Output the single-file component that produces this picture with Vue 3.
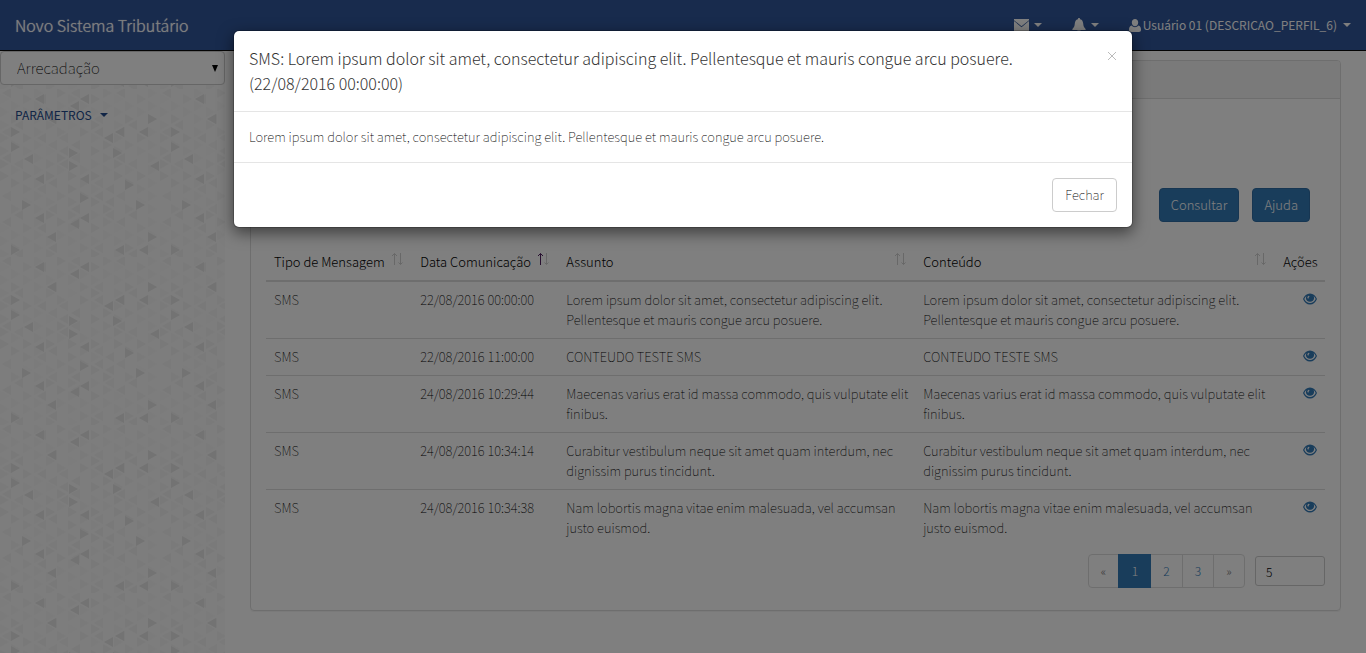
<script setup>
import { ref } from 'vue'

const modulo = ref('Arrecadação')
const porPagina = ref('5')

const colunas = [
  { titulo: 'Tipo de Mensagem', classe: 'c-tipo' },
  { titulo: 'Data Comunicação', classe: 'c-data', ordem: 'asc' },
  { titulo: 'Assunto', classe: 'c-assunto' },
  { titulo: 'Conteúdo', classe: 'c-conteudo' },
]

const lorem = 'Lorem ipsum dolor sit amet, consectetur adipiscing elit. Pellentesque et mauris congue arcu posuere.'
const mensagens = [
  { data: '22/08/2016 00:00:00', texto: lorem },
  { data: '22/08/2016 11:00:00', texto: 'CONTEUDO TESTE SMS' },
  { data: '24/08/2016 10:29:44', texto: 'Maecenas varius erat id massa commodo, quis vulputate elit finibus.' },
  { data: '24/08/2016 10:34:14', texto: 'Curabitur vestibulum neque sit amet quam interdum, nec dignissim purus tincidunt.' },
  { data: '24/08/2016 10:34:38', texto: 'Nam lobortis magna vitae enim malesuada, vel accumsan justo euismod.' },
]

// Triangle texture of the sidebar: [x of the upright side, y centre, direction]
const fortes = [
  [44, 10, -1], [89, 10, -1], [79, 17, -1], [56, 30, -1], [148, 30, 1], [11, 43, 1],
  [124, 43, -1], [148, 43, -1], [113, 49, -1], [11, 58, 1], [69, 64, 1], [113, 64, 1],
  [33, 70, -1], [69, 77, 1], [159, 77, -1], [44, 90, -1], [89, 90, -1], [125, 96, 1],
  [80, 109, 1], [22, 116, 1], [136, 116, 1], [44, 129, -1], [89, 129, -1], [79, 135, -1],
  [56, 148, -1], [148, 148, 1], [11, 161, 1], [124, 161, -1], [148, 161, -1],
]
const tri = (x, y, d) => `M${x} ${y - 5}L${x + 9 * d} ${y}L${x} ${y + 5}Z`
const fracos = []
for (let i = 0; i < 14; i++) {
  for (let j = 0; j < 13; j++) {
    const x = Math.round(i * 11.4)
    const y = Math.round(j * 12.9 + (i % 2 ? 4 : 10))
    const n = (i * 7 + j * 11 + i * j * 3) % 10
    if (n < 7) fracos.push({ d: tri(x, y, 1), o: 0.08 + n * 0.04 })
    else fracos.push({ d: tri(x, y, -1), o: 0.5 - n * 0.03 })
  }
}
const escuros = fortes.map(([x, y, d]) => tri(x, y, d)).join('')
</script>

<template>
  <div class="page">
    <header class="navbar">
      <a class="brand" href="#">Novo Sistema Tributário</a>
      <nav class="nav-right">
        <a href="#" class="nav-item" aria-label="Mensagens">
          <svg width="15" height="12" viewBox="0 0 15 12"><path d="M0 0H15V1.2L7.5 7.2 0 1.2ZM0 2.1L7.5 8.2 15 2.1V12H0Z" /></svg>
          <span class="caret"></span>
        </a>
        <a href="#" class="nav-item" aria-label="Notificações">
          <svg width="14" height="14" viewBox="0 0 14 14"><path d="M7 0C7.7 0 8.1.5 8.1 1.2 10.3 1.7 11 3.5 11.2 5.6 11.4 8.3 12 9.5 13.6 11V12H.4V11C2 9.5 2.6 8.3 2.8 5.6 3 3.5 3.7 1.7 5.9 1.2 5.9.5 6.3 0 7 0ZM5.3 12.5H8.7C8.6 13.4 7.9 14 7 14S5.4 13.4 5.3 12.5Z" /></svg>
          <span class="caret"></span>
        </a>
        <a href="#" class="nav-item user">
          <svg width="12" height="13" viewBox="0 0 12 13"><path d="M6 0C7.9 0 9.2 1.4 9.2 3.5 9.2 5.6 7.8 7.2 6 7.2S2.8 5.6 2.8 3.5C2.8 1.4 4.1 0 6 0ZM2.7 6.5C3.5 7.5 4.7 8.2 6 8.2S8.5 7.5 9.3 6.5C11.3 6.8 12 8.6 12 11 12 12.2 11.2 13 10 13H2C.8 13 0 12.2 0 11 0 8.6.7 6.8 2.7 6.5Z" /></svg>
          <span class="user-name">Usuário 01 (DESCRICAO_PERFIL_6)</span>
          <span class="caret"></span>
        </a>
      </nav>
    </header>

    <div class="columns">
      <aside class="sidebar">
        <svg class="texture" width="100%" height="100%" aria-hidden="true">
          <defs>
            <pattern id="tri" y="38" width="160" height="168" patternUnits="userSpaceOnUse">
              <path v-for="(t, k) in fracos" :key="k" :d="t.d" fill="#e0e0e0" :opacity="t.o" />
              <path :d="escuros" fill="#e6e6e6" />
            </pattern>
          </defs>
          <rect width="100%" height="100%" fill="url(#tri)" />
        </svg>
        <div class="select-wrap">
          <select v-model="modulo" aria-label="Módulo">
            <option>Arrecadação</option>
          </select>
          <svg class="arrow" width="6" height="7" viewBox="0 0 6 7"><path d="M0 0H6L3 7Z" /></svg>
        </div>
        <a class="menu" href="#">PARÂMETROS <span class="caret"></span></a>
      </aside>

      <main class="main">
        <section class="panel">
          <div class="panel-heading"></div>
          <div class="panel-body">
            <div class="actions">
              <button type="button" class="btn primary">Consultar</button>
              <button type="button" class="btn primary">Ajuda</button>
            </div>
            <table>
              <thead>
                <tr>
                  <th v-for="c in colunas" :key="c.titulo" :class="c.classe" scope="col">
                    <div class="th">
                      <span>{{ c.titulo }}</span>
                      <svg class="sort" width="13" height="14" viewBox="0 0 13 14">
                        <path :class="{ on: c.ordem === 'asc' }" d="M3.5 13V1.5M1 4L3.5 1.5 6 4" />
                        <path d="M9.5 1V12.5M7.5 10.5L9.5 12.5 11.5 10.5" />
                      </svg>
                    </div>
                  </th>
                  <th class="acoes" scope="col">Ações</th>
                </tr>
              </thead>
              <tbody>
                <tr v-for="m in mensagens" :key="m.data">
                  <td>SMS</td>
                  <td>{{ m.data }}</td>
                  <td class="texto">{{ m.texto }}</td>
                  <td class="texto">{{ m.texto }}</td>
                  <td class="acoes">
                    <a href="#" class="eye" aria-label="Visualizar">
                      <svg width="14" height="12" viewBox="0 0 15 12"><path fill-rule="evenodd" d="M7.5 0C11 0 13.5 2.4 15 6 13.5 9.6 11 12 7.5 12S1.500 9.600 0 6C1.500 2.400 4 0 7.500 0ZM3.700 2.700C2.700 3.400 2 4.500 1.400 6 2.800 8.900 4.900 10.400 7.500 10.400S12.200 8.900 13.600 6C13 4.500 12.300 3.400 11.300 2.700 11.700 3.400 11.900 4.100 11.900 4.900 11.900 7.300 10 9 7.500 9S3.100 7.300 3.100 4.900C3.100 4.100 3.300 3.400 3.700 2.700ZM6.200 2.400C5 2.900 4.500 4 4.800 5.300L6.100 5.400C6 4.300 6.400 3.500 7.300 3.100Z" /></svg>
                    </a>
                  </td>
                </tr>
              </tbody>
            </table>
            <div class="footer">
              <nav class="pages" aria-label="Paginação">
                <a href="#" class="off">«</a>
                <a href="#" class="active">1</a>
                <a href="#">2</a>
                <a href="#">3</a>
                <a href="#" class="off">»</a>
              </nav>
              <input v-model="porPagina" type="text" aria-label="Registros por página" />
            </div>
          </div>
        </section>
      </main>
    </div>

    <div class="backdrop">
      <div class="modal" role="dialog" aria-labelledby="modal-titulo">
        <div class="modal-header">
          <h4 id="modal-titulo">SMS: {{ lorem }} (22/08/2016 00:00:00)</h4>
          <button type="button" class="close" aria-label="Fechar janela">
            <svg width="10" height="10" viewBox="0 0 10 10"><path d="M1 1L9 9M9 1L1 9" /></svg>
          </button>
        </div>
        <div class="modal-body">{{ lorem }}</div>
        <div class="modal-footer">
          <button type="button" class="btn">Fechar</button>
        </div>
      </div>
    </div>
  </div>
</template>

<style>
body {
  margin: 0;
  background: #fff;
}
</style>

<style scoped>
.page,
.page * {
  box-sizing: border-box;
}
.page {
  position: relative;
  display: flex;
  flex-direction: column;
  min-height: 100vh;
  font-family: "Noto Sans CJK SC", "Open Sans", sans-serif;
  font-weight: 100;
  font-size: 13px;
  line-height: 20px;
  color: #000;
}
a {
  text-decoration: none;
}
button,
select,
input {
  font: inherit;
  color: inherit;
}
.navbar {
  display: flex;
  justify-content: space-between;
  align-items: center;
  height: 51px;
  padding: 0 15px;
  background: #30569a;
  border-bottom: 1px solid #080808;
}
.brand {
  color: #fff;
  font-size: 16px;
  font-weight: 300;
  text-shadow: 0 0 1px #fff;
}
.nav-right {
  display: flex;
  align-items: center;
  gap: 30px;
}
.nav-item {
  display: flex;
  align-items: center;
  gap: 5px;
  color: #fff;
  font-size: 12px;
  font-weight: 400;
}
.nav-item svg {
  fill: currentColor;
}
.user {
  gap: 2px;
}
.user-name {
  margin-right: 4px;
}
.caret {
  border: 4px solid transparent;
  border-top-color: currentColor;
  border-bottom: 0;
}
.columns {
  display: flex;
  flex: 1;
}
.sidebar {
  position: relative;
  width: 225px;
  flex: none;
  background: #fafafa;
}
.texture {
  position: absolute;
  inset: 0;
}
.select-wrap {
  position: relative;
}
.select-wrap select {
  display: block;
  width: 100%;
  height: 34px;
  padding: 0 16px;
  appearance: none;
  font-size: 15px;
  background: #fff;
  border: 1px solid #ccc;
  border-radius: 4px;
}
.arrow {
  position: absolute;
  right: 7px;
  top: 14px;
}
.menu {
  position: relative;
  display: flex;
  align-items: center;
  gap: 8px;
  padding: 20px 15px;
  color: #234a8c;
  font-size: 12px;
  font-weight: 400;
}
.main {
  flex: 1;
  min-width: 0;
  padding: 9px 25px 42px;
}
.panel {
  border: 1px solid #ddd;
  border-radius: 4px;
  box-shadow: 0 1px 1px rgba(0, 0, 0, 0.05);
}
.panel-heading {
  height: 38px;
  background: #f5f5f5;
  border-bottom: 1px solid #ddd;
  border-radius: 3px 3px 0 0;
}
.panel-body {
  padding: 89px 15px 22px;
}
.actions {
  display: flex;
  justify-content: flex-end;
  gap: 13px;
  padding-right: 15px;
  margin-bottom: 22px;
}
.btn {
  height: 34px;
  padding: 0 12px;
  border: 1px solid #ccc;
  border-radius: 4px;
  background: #fff;
}
.primary {
  padding: 0 11px;
  background: #337ab7;
  border-color: #2e6da4;
  color: #fff;
  font-weight: 300;
}
table {
  width: 100%;
  table-layout: fixed;
  border-collapse: collapse;
}
th,
td {
  padding: 8px;
  text-align: left;
  vertical-align: top;
  border-top: 1px solid #ddd;
}
th {
  border-top: 0;
  border-bottom: 2px solid #ddd;
  font-weight: 300;
}
.texto {
  padding-right: 4px;
}
.c-tipo,
.c-data {
  width: 13.8%;
}
.c-assunto {
  width: 33.7%;
}
.c-conteudo {
  width: 34%;
}
.th {
  display: flex;
  justify-content: space-between;
  align-items: flex-start;
  white-space: nowrap;
}
.sort {
  flex: none;
  fill: none;
  stroke: #d0d0d0;
}
.sort .on {
  stroke: #502060;
}
.acoes {
  text-align: right;
}
.eye {
  display: flex;
  justify-content: flex-end;
  padding-top: 3px;
}
.eye svg {
  fill: #337ab7;
}
.footer {
  display: flex;
  justify-content: flex-end;
  align-items: center;
  gap: 10px;
  margin-top: 8px;
}
.pages {
  display: flex;
  border: 1px solid #ddd;
  border-radius: 4px;
}
.pages a {
  width: 31px;
  height: 32px;
  line-height: 32px;
  text-align: center;
  color: #337ab7;
  font-size: 12px;
  font-weight: 300;
  border-left: 1px solid #ddd;
}
.pages a:first-child {
  width: 29px;
  border-left: 0;
}
.pages .off {
  color: #777;
}
.pages .active {
  width: 33px;
  height: 34px;
  line-height: 34px;
  margin: -1px 0;
  background: #337ab7;
  border-color: #337ab7;
  color: #fff;
}
.pages .active + a {
  border-left: 0;
}
.footer input {
  width: 70px;
  height: 30px;
  padding: 0 10px;
  font-size: 12px;
  font-weight: 300;
  background: #fff;
  border: 1px solid #ccc;
  border-radius: 3px;
}
.backdrop {
  position: absolute;
  inset: 0;
  padding: 30px 10px;
  background: rgba(0, 0, 0, 0.5);
}
.modal {
  max-width: 900px;
  margin: 0 auto;
  background: #fff;
  background-clip: padding-box;
  border: 1px solid rgba(0, 0, 0, 0.2);
  border-radius: 6px;
  box-shadow: 0 5px 15px rgba(0, 0, 0, 0.5);
}
.modal-header {
  display: flex;
  align-items: flex-start;
  justify-content: space-between;
  padding: 15px;
  border-bottom: 1px solid #e5e5e5;
}
h4 {
  margin: 0;
  max-width: 800px;
  color: #333;
  font-size: 16px;
  font-weight: 300;
  line-height: 25px;
}
.close {
  display: flex;
  padding: 5px 0;
  border: 0;
  background: none;
}
.close svg {
  fill: none;
  stroke: #bbb;
}
.modal-body {
  padding: 15px;
}
.modal-footer {
  display: flex;
  justify-content: flex-end;
  padding: 15px;
  border-top: 1px solid #e5e5e5;
}
</style>
